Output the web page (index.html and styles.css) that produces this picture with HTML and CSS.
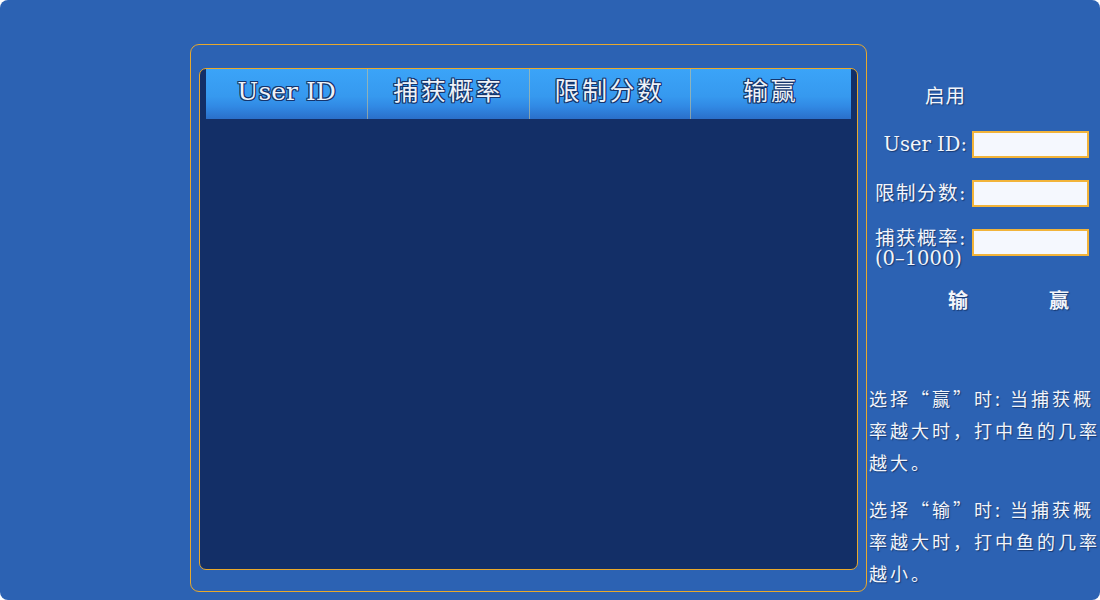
FILE: index.html
```html
<!DOCTYPE html>
<html lang="zh-CN">
<head>
<meta charset="utf-8">
<title>设置</title>
<link rel="stylesheet" href="styles.css">
</head>
<body>
<div class="page">
  <section class="board">
    <div class="table">
      <div class="thead">
        <div class="th">User ID</div>
        <div class="th cjk">捕获概率</div>
        <div class="th cjk">限制分数</div>
        <div class="th cjk">输赢</div>
      </div>
    </div>
  </section>
  <aside class="side">
    <div class="enable">启用</div>
    <div class="field">
      <label class="lbl">User ID:</label>
      <input class="inp" type="text">
    </div>
    <div class="field">
      <label class="lbl lbl-cjk">限制分数:</label>
      <input class="inp" type="text">
    </div>
    <div class="field">
      <label class="lbl lbl-two"><span class="two"><span class="line lbl-cjk">捕获概率:</span><span class="line">(0–1000)</span></span></label>
      <input class="inp" type="text">
    </div>
    <div class="choice"><span class="opt">输</span><span class="opt">赢</span></div>
    <p class="note">选择“赢”时: 当捕获概率越大时，打中鱼的几率越大。</p>
    <p class="note">选择“输”时: 当捕获概率越大时，打中鱼的几率越小。</p>
  </aside>
</div>
</body>
</html>
```

FILE: styles.css
```css
html, body {
  margin: 0;
  padding: 0;
  background: #ffffff;
}

.page {
  width: 1100px;
  height: 600px;
  box-sizing: border-box;
  background: #2c62b3;
  border-radius: 8px;
  overflow: hidden;
  display: flex;
  align-items: flex-start;
  padding: 44px 0 0 190px;
  font-family: "DejaVu Serif", "Noto Sans CJK SC", serif;
  color: #f2f5fb;
}

.board {
  width: 677px;
  height: 548px;
  box-sizing: border-box;
  border: 1px solid #e8a82c;
  border-radius: 9px;
  padding: 23px 8px 21px 8px;
  flex: none;
}

.table {
  height: 100%;
  box-sizing: border-box;
  background: #132f67;
  border: 1px solid #eaa92a;
  border-radius: 7px;
  padding: 0 6px;
}

.thead {
  display: grid;
  grid-template-columns: repeat(4, 1fr);
  height: 50px;
  background: linear-gradient(to bottom, #3ba4f8 0%, #3699ef 55%, #3189e4 75%, #2a6fc9 100%);
}

.th {
  text-align: center;
  font-size: 25px;
  line-height: 45px;
  color: #eef2f8;
  text-shadow: 1px 0 0 #15356c, -1px 0 0 #15356c, 0 1px 0 #15356c, 0 -1px 0 #15356c,
    1px 1px 0 #15356c, -1px -1px 0 #15356c, 1px -1px 0 #15356c, -1px 1px 0 #15356c;
}

.th + .th {
  border-left: 1px solid rgba(214, 196, 140, 0.55);
}

.th.cjk {
  letter-spacing: 2.5px;
}

.side {
  width: 233px;
  flex: none;
  display: flex;
  flex-direction: column;
  padding-top: 41px;
  font-size: 19.5px;
  text-shadow: 1px 1px 1px rgba(10, 30, 70, 0.6);
}

.enable {
  width: 99px;
  text-align: right;
  line-height: 24px;
  letter-spacing: 1px;
}

.field {
  display: flex;
  align-items: flex-start;
  gap: 5px;
  margin-top: 22px;
}

.lbl {
  width: 100px;
  flex: none;
  text-align: right;
  line-height: 27px;
  white-space: nowrap;
}

.lbl-cjk {
  letter-spacing: 1.5px;
}

.lbl-two {
  line-height: 20px;
}

.two {
  display: inline-flex;
  flex-direction: column;
  text-align: left;
}

.line {
  display: block;
  height: 20px;
  line-height: 20px;
}

.inp {
  width: 117px;
  height: 27px;
  box-sizing: border-box;
  margin: 0;
  border: 2px solid #f2b43a;
  background: #f5f8fe;
  padding: 0 4px;
  font: inherit;
  font-size: 14px;
}

.choice {
  display: flex;
  gap: 81px;
  padding-left: 81px;
  margin-top: 20px;
  font-size: 20px;
  line-height: 24px;
  font-weight: bold;
}

.note {
  margin: 0;
  width: 240px;
  padding-left: 2px;
  font-family: "Noto Sans CJK SC", sans-serif;
  font-size: 18px;
  letter-spacing: 3px;
  line-height: 32px;
}

.choice + .note {
  margin-top: 69px;
}

.note + .note {
  margin-top: 15px;
}
```
